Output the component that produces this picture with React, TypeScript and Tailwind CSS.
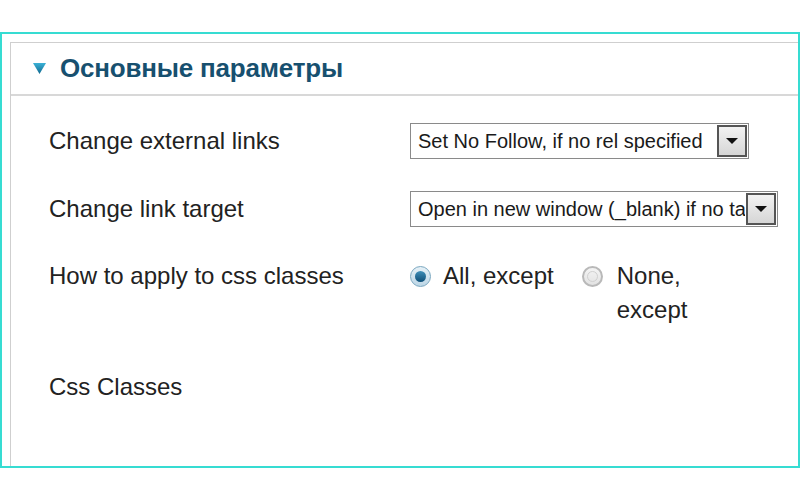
function SelectBox({ value, width }: { value: string; width: string }) {
  return (
    <div
      className={`flex h-[36px] items-stretch border border-[#8a8a8a] bg-white ${width}`}
    >
      <div className="flex-1 overflow-hidden whitespace-nowrap pl-[7px] text-[20px] leading-[34px] text-[#1a1a1a]">
        {value}
      </div>
      <div className="m-[1px] flex w-[30px] items-center justify-center border-2 border-[#555] bg-gradient-to-b from-[#f2f2f2] to-[#d6d6d6]">
        <svg width="14" height="8" viewBox="0 0 14 8">
          <path d="M1 1h12L7 7z" fill="#111" />
        </svg>
      </div>
    </div>
  );
}

function Radio({ checked }: { checked?: boolean }) {
  return checked ? (
    <span className="flex h-[21px] w-[21px] shrink-0 items-center justify-center rounded-full border border-[#7aa7c0] bg-gradient-to-b from-[#e6f1f7] to-[#bcd6e6]">
      <span className="h-[11px] w-[11px] rounded-full bg-gradient-to-b from-[#3f8fb8] to-[#0d4f78]" />
    </span>
  ) : (
    <span className="flex h-[21px] w-[21px] shrink-0 items-center justify-center rounded-full border-2 border-[#b9b9b9] bg-gradient-to-b from-[#f4f4f4] to-[#e2e2e2]">
      <span className="h-[11px] w-[11px] rounded-full border border-[#d0d0d0]" />
    </span>
  );
}

export default function App() {
  return (
    <div className="h-[500px] w-[800px] bg-white pt-[32px] font-[family-name:Liberation_Sans,Arial,sans-serif] text-[#222]">
      <div className="h-[436px] border-2 border-[#36dcd2] pl-[8px] pt-[8px]">
        <div className="h-full border-l border-t border-[#cfcfcf]">
          {/* Header */}
          <div className="flex h-[53px] items-center gap-[14px] border-b-2 border-[#d8d8d8] pl-[22px]">
            <svg width="13" height="11" viewBox="0 0 13 11">
              <defs>
                <linearGradient id="tri" x1="0" y1="0" x2="0" y2="1">
                  <stop offset="0" stopColor="#3bb1d6" />
                  <stop offset="1" stopColor="#10698f" />
                </linearGradient>
              </defs>
              <path d="M0 0h13L6.5 11z" fill="url(#tri)" />
            </svg>
            <h2 className="text-[26px] font-bold tracking-[-0.2px] text-[#17506f]">
              Основные параметры
            </h2>
          </div>

          {/* Parameters */}
          <div className="grid grid-cols-[361px_1fr] pl-[38px] pt-[27px] text-[24px]">
            <div className="flex h-[36px] items-center">Change external links</div>
            <div>
              <SelectBox value="Set No Follow, if no rel specified" width="w-[339px]" />
            </div>

            <div className="mt-[32px] flex h-[36px] items-center">Change link target</div>
            <div className="mt-[32px]">
              <SelectBox value="Open in new window (_blank) if no target" width="w-[368px]" />
            </div>

            <div className="mt-[32px] leading-[34px]">How to apply to css classes</div>
            <div className="mt-[32px] flex leading-[34px]">
              <label className="flex items-start gap-[12px]">
                <span className="pt-[7px]">
                  <Radio checked />
                </span>
                <span>All, except</span>
              </label>
              <label className="ml-[28px] flex items-start gap-[14px]">
                <span className="pt-[7px]">
                  <Radio />
                </span>
                <span>
                  None,
                  <br />
                  except
                </span>
              </label>
            </div>

            <div className="mt-[43px] leading-[34px]">Css Classes</div>
            <div />
          </div>
        </div>
      </div>
    </div>
  );
}
